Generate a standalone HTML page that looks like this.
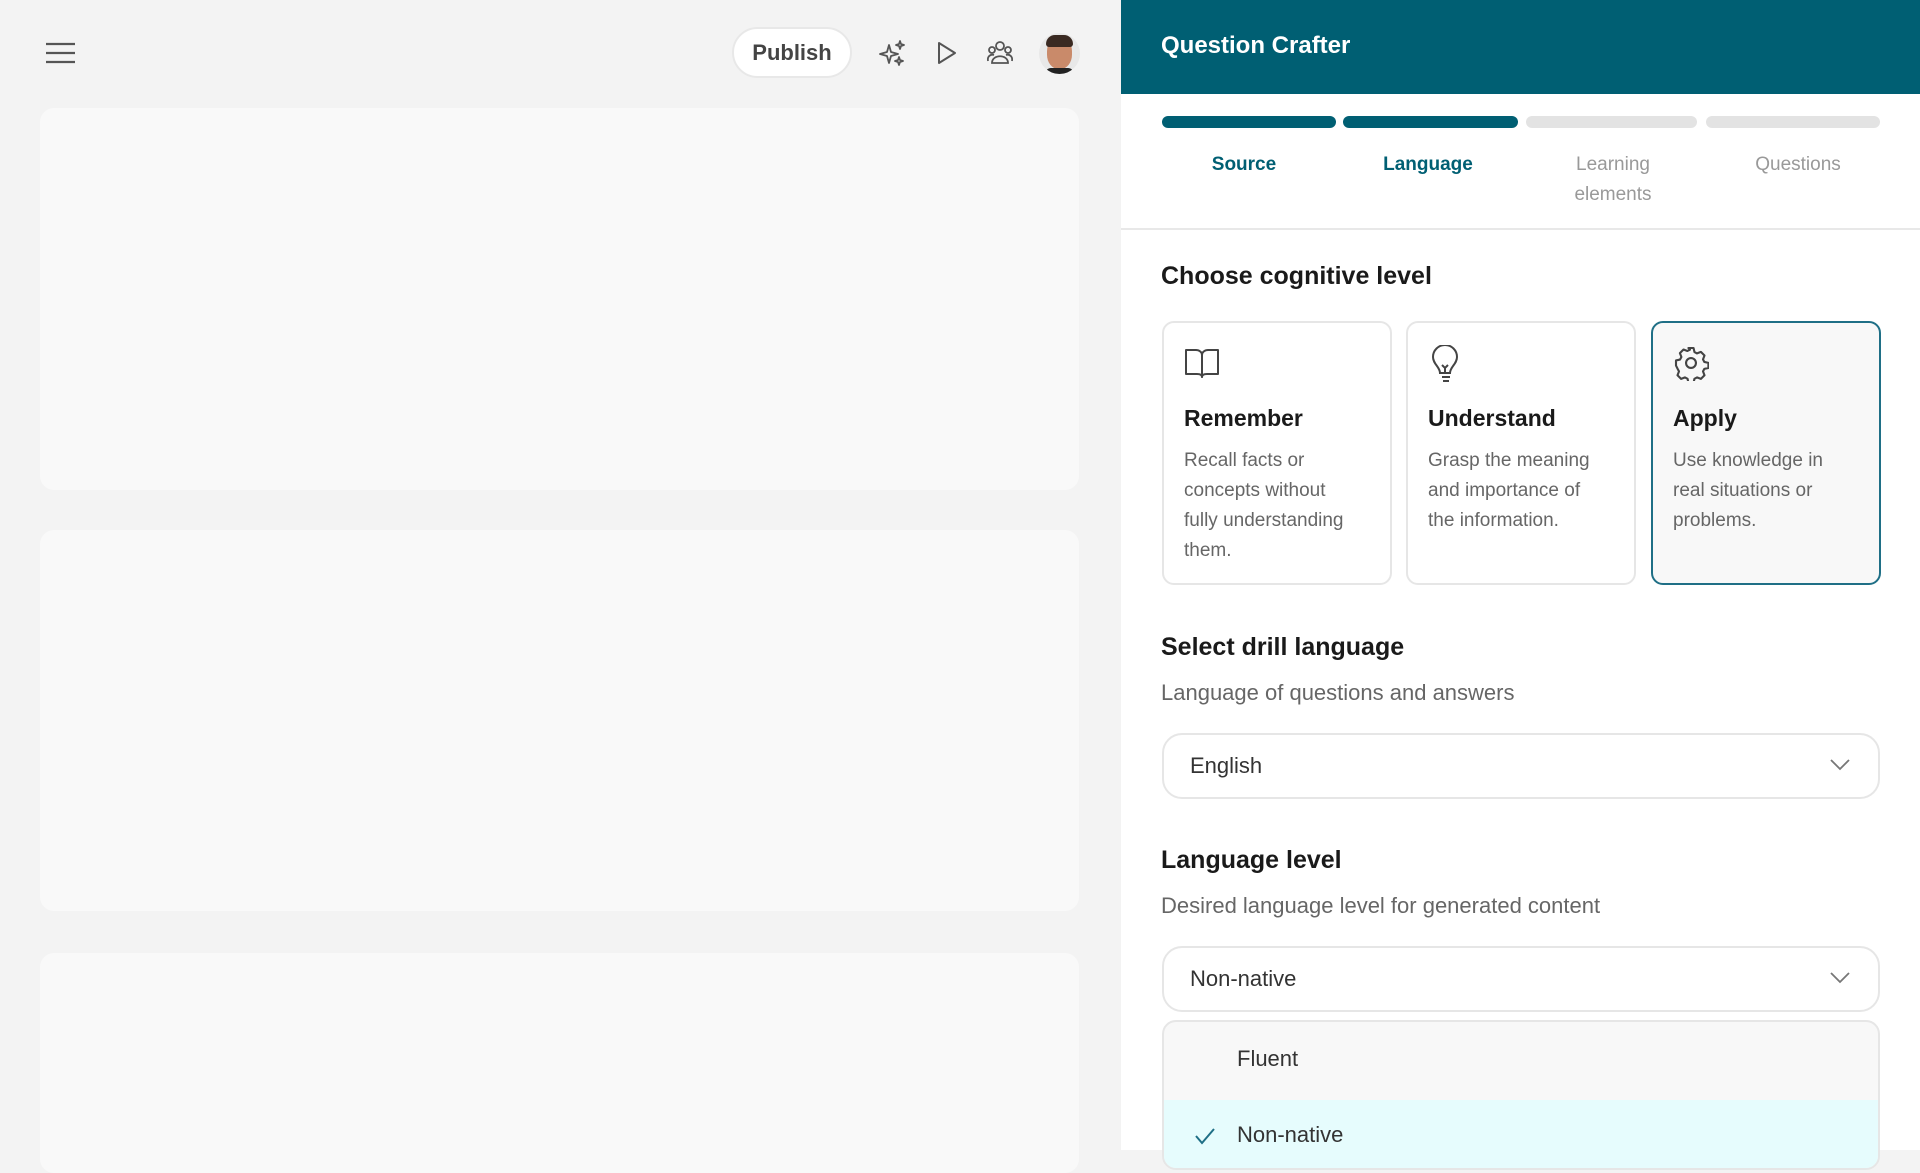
<!DOCTYPE html>
<html><head><meta charset="utf-8"><style>
*{box-sizing:border-box;margin:0;padding:0}
body{width:1920px;height:1150px;overflow:hidden;background:#f3f3f3;font-family:"Liberation Sans",sans-serif;position:relative;color:#222}
.abs{position:absolute}
.lcard{position:absolute;left:40px;width:1039px;background:#f9f9f9;border-radius:14px}
.panel{position:absolute;left:1121px;top:0;width:799px;height:1150px;background:#fff}
.hdr{position:absolute;left:0;top:0;width:799px;height:94px;background:#005f73}
.bar{position:absolute;top:116px;height:12px;border-radius:6px}
.step{position:absolute;top:150px;width:180px;text-align:center;font-size:19px;line-height:30px;color:#999}
.h2{position:absolute;left:1161px;font-size:25px;font-weight:bold;color:#1a1a1a}
.sub{position:absolute;left:1161px;font-size:22px;color:#666}
.card{position:absolute;top:321px;width:230px;height:264px;border:2px solid #e6e6e6;border-radius:12px;background:#fff}
.card .t{position:absolute;left:20px;top:82px;font-size:23px;font-weight:bold;color:#1a1a1a}
.card .d{position:absolute;left:20px;top:123px;width:182px;font-size:19px;line-height:30px;color:#666}
.card svg{position:absolute;left:20px;top:22px}
.sel{position:absolute;left:1162px;width:718px;height:66px;border:2px solid #e6e6e6;border-radius:20px;background:#fff}
.sel span{position:absolute;left:26px;top:18px;font-size:22px;color:#333}
.sel svg{position:absolute;right:28px;top:24px}
</style></head><body>
<svg class="abs" style="left:45px;top:42px" width="31" height="22" viewBox="0 0 31 22"><path d="M1 2h29M1 11h29M1 20h29" stroke="#555" stroke-width="2.2"/></svg>
<div class="abs" style="left:732px;top:27px;width:120px;height:51px;border:2px solid #e8e8e8;border-radius:26px;background:#fff;font-size:22px;font-weight:bold;color:#444;text-align:center;line-height:47px">Publish</div>
<svg class="abs" style="left:879px;top:39px" width="28" height="28" viewBox="0 0 28 28" fill="none" stroke="#555" stroke-width="1.8" stroke-linejoin="round"><path d="M10 6 L12 13 L19 15 L12 17 L10 24 L8 17 L1 15 L8 13 Z"/><path d="M21 2 L22 5 L25 6 L22 7 L21 10 L20 7 L17 6 L20 5Z"/><path d="M20 18 L21 21 L24 22 L21 23 L20 26 L19 23 L16 22 L19 21Z"/></svg>
<svg class="abs" style="left:936px;top:41px" width="22" height="24" viewBox="0 0 22 24"><path d="M3 2 L19 12 L3 22 Z" fill="none" stroke="#555" stroke-width="2" stroke-linejoin="round"/></svg>
<svg class="abs" style="left:986px;top:40px" width="28" height="26" viewBox="0 0 28 26" fill="none" stroke="#555" stroke-width="1.8"><circle cx="14" cy="6" r="4"/><circle cx="6" cy="10" r="3"/><circle cx="22" cy="10" r="3"/><path d="M6 23 C6 14 22 14 22 23 Z"/><path d="M2 21 C1 16 5 14 8 15 M26 21 C27 16 23 14 20 15"/></svg>
<div class="abs" style="left:1039px;top:33px;width:41px;height:41px;border-radius:50%;background:#e8e8e8;overflow:hidden"><div style="position:absolute;left:8px;top:4px;width:25px;height:32px;border-radius:45%;background:#c98a6a"></div><div style="position:absolute;left:7px;top:2px;width:27px;height:12px;border-radius:12px 12px 4px 4px;background:#3a2a22"></div><div style="position:absolute;left:6px;top:35px;width:29px;height:10px;background:#222;border-radius:6px 6px 0 0"></div></div>
<div class="lcard" style="top:108px;height:382px"></div>
<div class="lcard" style="top:530px;height:381px"></div>
<div class="lcard" style="top:953px;height:220px"></div>

<div class="panel">
<div class="hdr"><div style="position:absolute;left:40px;top:32px;font-size:24px;font-weight:bold;color:#fff">Question Crafter</div></div>
<div class="bar" style="left:41px;width:174px;background:#005f73"></div>
<div class="bar" style="left:222px;width:175px;background:#005f73"></div>
<div class="bar" style="left:405px;width:171px;background:#e3e3e3"></div>
<div class="bar" style="left:585px;width:174px;background:#e3e3e3"></div>
<div class="step" style="left:33px;color:#005f73;font-weight:bold">Source</div>
<div class="step" style="left:217px;color:#005f73;font-weight:bold">Language</div>
<div class="step" style="left:402px">Learning<br>elements</div>
<div class="step" style="left:587px">Questions</div>
<div style="position:absolute;left:0;top:228px;width:799px;height:2px;background:#e8e8e8"></div>
</div>

<div class="h2" style="top:262px">Choose cognitive level</div>
<div class="card" style="left:1162px"><svg width="36" height="36" viewBox="0 0 36 36" fill="none" stroke="#444" stroke-width="2" stroke-linejoin="round"><path d="M2 5 H12 C15 5 18 7 18 10 V32 C18 30 16 29 13 29 H2 Z"/><path d="M34 5 H24 C21 5 18 7 18 10 V32 C18 30 20 29 23 29 H34 Z"/></svg><div class="t">Remember</div><div class="d" style="width:170px">Recall facts or concepts without fully understanding them.</div></div>
<div class="card" style="left:1406px"><svg width="36" height="40" viewBox="0 0 36 40" fill="none" stroke="#444" stroke-width="2"><path d="M12 28 C12 22 5 19 5 12 A12 12 0 0 1 29 12 C29 19 22 22 22 28 Z"/><path d="M14 32h8M15 36h6M14 20l3 3 3-3M17 23v5"/></svg><div class="t">Understand</div><div class="d">Grasp the meaning and importance of the information.</div></div>
<div class="card" style="left:1651px;border-color:#1f6f86;background:#f8f8f8"><svg width="36" height="36" viewBox="0 0 24 24" fill="none" stroke="#444" stroke-width="1.4" stroke-linejoin="round"><path d="M10.3 2h3.4l.6 2.7 1.7.9 2.6-1 2.4 2.4-1 2.6.9 1.7 2.7.6v3.4l-2.7.6-.9 1.7 1 2.6-2.4 2.4-2.6-1-1.7.9-.6 2.7h-3.4l-.6-2.7-1.7-.9-2.6 1-2.4-2.4 1-2.6-.9-1.7L2 13.7v-3.4l2.7-.6.9-1.7-1-2.6L7 3l2.6 1 1.7-.9z"/><circle cx="12" cy="12" r="3.3"/></svg><div class="t">Apply</div><div class="d">Use knowledge in real situations or problems.</div></div>

<div class="h2" style="top:633px">Select drill language</div>
<div class="sub" style="top:680px">Language of questions and answers</div>
<div class="sel" style="top:733px"><span>English</span><svg width="20" height="12" viewBox="0 0 20 12"><path d="M1 1l9 9 9-9" fill="none" stroke="#777" stroke-width="1.8"/></svg></div>

<div class="h2" style="top:846px">Language level</div>
<div class="sub" style="top:893px">Desired language level for generated content</div>
<div class="sel" style="top:946px"><span>Non-native</span><svg width="20" height="12" viewBox="0 0 20 12"><path d="M1 1l9 9 9-9" fill="none" stroke="#777" stroke-width="1.8"/></svg></div>
<div class="abs" style="left:1162px;top:1020px;width:718px;height:150px;border:2px solid #e6e6e6;border-radius:14px;background:#f8f8f8;overflow:hidden">
<div style="position:absolute;left:73px;top:24px;font-size:22px;color:#333">Fluent</div>
<div style="position:absolute;left:0;top:78px;width:718px;height:80px;background:#e6fcfd"></div>
<svg style="position:absolute;left:30px;top:105px" width="22" height="18" viewBox="0 0 22 18"><path d="M2 9l6 7L20 2" fill="none" stroke="#1f6f86" stroke-width="2"/></svg>
<div style="position:absolute;left:73px;top:100px;font-size:22px;color:#333">Non-native</div>
</div>
</body></html>
